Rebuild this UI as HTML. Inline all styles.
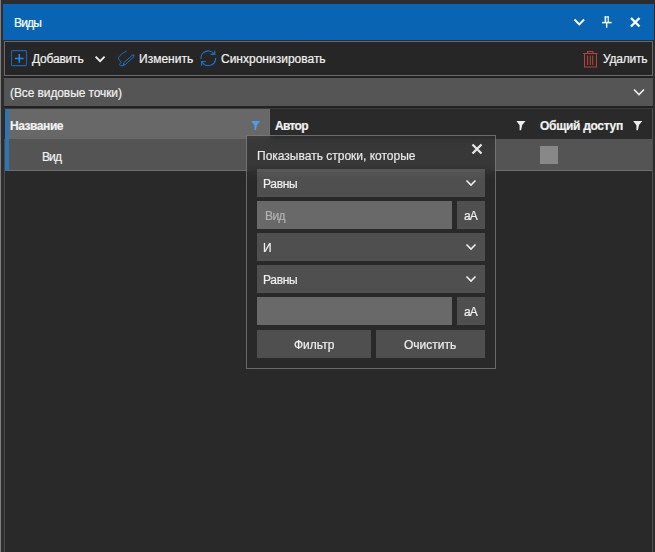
<!DOCTYPE html>
<html><head><meta charset="utf-8">
<style>
*{box-sizing:border-box}
html,body{margin:0;padding:0}
body{width:655px;height:552px;overflow:hidden;position:relative;background:#2d2d2d;font-family:"Liberation Sans",sans-serif;font-size:12px;color:#f2f2f2}
.a{position:absolute}
.t{position:absolute;white-space:nowrap;line-height:14px;-webkit-text-stroke:0.2px currentColor}
.b{font-weight:bold}
svg{position:absolute;overflow:visible}
</style></head><body>
<div class="a" style="left:0;top:0;width:1px;height:552px;background:#7f7f7f"></div>
<!-- title bar -->
<div class="a" style="left:3px;top:4px;width:651px;height:36px;background:#0965b3"></div>
<div class="t" style="left:14px;top:16px;color:#fff;letter-spacing:-0.8px">Виды</div>
<svg style="left:0;top:0" width="655" height="40">
  <polyline points="574.5,19.5 579.3,24.3 584.1,19.5" fill="none" stroke="#fff" stroke-width="1.9"/>
  <rect x="604.6" y="16.4" width="1.6" height="6" fill="#fff"/>
  <rect x="607.6" y="16.4" width="1.2" height="6" fill="#fff"/>
  <rect x="604.6" y="16.4" width="4.2" height="1.1" fill="#fff"/>
  <path d="M602,22.6 H611.6" fill="none" stroke="#fff" stroke-width="1.5"/>
  <path d="M606.7,22.6 V27.8" fill="none" stroke="#fff" stroke-width="1.3"/>
  <path d="M631,18 L639.5,26.5 M639.5,18 L631,26.5" fill="none" stroke="#fff" stroke-width="2.4"/>
</svg>
<!-- panel -->
<div class="a" style="left:4px;top:41px;width:649px;height:511px;background:#292929;border-left:1px solid #4a4a4a;border-right:1px solid #505050"></div>
<!-- toolbar -->
<div class="a" style="left:4px;top:41px;width:649px;height:35px;background:#262626;border:1px solid #6a6a6a"></div>
<div class="a" style="left:4px;top:76px;width:649px;height:2px;background:#222"></div>
<svg style="left:0;top:0" width="655" height="80">
  <rect x="11.5" y="50.6" width="15" height="15" rx="1.2" fill="none" stroke="#1866b2" stroke-width="1.1"/>
  <path d="M19.3,54 V62.8 M15,58.4 H23.6" stroke="#1f8ae6" stroke-width="1.5"/>
  <polyline points="95.6,56.6 100.1,61.1 104.6,56.6" fill="none" stroke="#f0f0f0" stroke-width="1.85"/>
  <path d="M126.6,51.2 C122.5,53 118.8,55.8 118.3,58.8 L121.2,62.2 L119.4,64.4 L120.2,65.6 L123.2,65.6" fill="none" stroke="#1a74c6" stroke-width="1"/>
  <path d="M123.2,65.6 L123.9,62.6 L132.6,55 L134,56.6 L125.6,64.4 Z" fill="none" stroke="#1a74c6" stroke-width="1"/>
  <path d="M123.2,65.6 L123.9,63 L125.2,64.4 Z M132.4,54.9 L133.4,54.3 L134.6,55.6 L134,56.6 Z" fill="#1a74c6"/>
  <path d="M201,59 A7.2,7.2 0 0 1 214.4,54.6" fill="none" stroke="#1a72c4" stroke-width="1.2"/>
  <path d="M210.6,54.4 H214.8 V50.4" fill="none" stroke="#1a72c4" stroke-width="1.2"/>
  <path d="M215.6,58 A7.2,7.2 0 0 1 202.2,62" fill="none" stroke="#1a72c4" stroke-width="1.2"/>
  <path d="M205.8,61.5 H201.6 V65.8" fill="none" stroke="#1a72c4" stroke-width="1.2"/>
  <g fill="none" stroke="#b5433a" stroke-width="1.05">
    <path d="M583,53.5 H597.5"/>
    <path d="M587.5,53.5 V51.5 H593 V53.5"/>
    <path d="M584.5,53.5 V67 H596.5 V53.5"/>
    <path d="M587.6,55.5 V65 M590.3,55.5 V65 M592.7,55.5 V65"/>
  </g>
</svg>
<div class="t" style="left:32px;top:52px;letter-spacing:-0.2px">Добавить</div>
<div class="t" style="left:139px;top:52px">Изменить</div>
<div class="t" style="left:221px;top:52px">Синхронизировать</div>
<div class="t" style="left:603px;top:52px;letter-spacing:-0.2px">Удалить</div>
<!-- filter dropdown -->
<div class="a" style="left:4px;top:78px;width:649px;height:28px;background:#555"></div>
<div class="t" style="left:10px;top:86px;letter-spacing:-0.1px">(Все видовые точки)</div>
<svg style="left:0;top:0" width="655" height="110">
  <polyline points="634,89.5 639,94.5 644,89.5" fill="none" stroke="#f0f0f0" stroke-width="1.6"/>
</svg>
<div class="a" style="left:4px;top:106px;width:649px;height:2px;background:#222"></div>
<!-- header -->
<div class="a" style="left:4px;top:108px;width:649px;height:31px;background:#2a2a2a;border-top:1px solid #3a3a3a;border-right:1px solid #505050"></div>
<div class="a" style="left:9px;top:109px;width:261px;height:30px;background:#686868;border-right:1px solid #6f6f6f"></div>
<div class="a" style="left:5px;top:109px;width:4px;height:62px;background:#2d75b4"></div>
<div class="t b" style="left:10px;top:119px;letter-spacing:-0.45px">Название</div>
<div class="t b" style="left:275px;top:119px;letter-spacing:-0.7px">Автор</div>
<div class="t b" style="left:540px;top:119px;letter-spacing:-0.3px">Общий доступ</div>
<svg style="left:0;top:0" width="655" height="140">
  <path d="M251.2,121 H260.3 L257,125 L255.9,130 H254.4 V125.2 Z" fill="#4a9ef0"/>
  <path d="M516.4,121 H525.5 L522.2,125 L521.1,130.2 H519.6 V125.2 Z" fill="#eeeeee"/>
  <path d="M633.2,121 H642.3 L639,125 L637.9,130.2 H636.4 V125.2 Z" fill="#eeeeee"/>
</svg>
<!-- row -->
<div class="a" style="left:9px;top:139px;width:643px;height:32px;background:#545454;border-bottom:1px solid #6e6e6e"></div>
<div class="t" style="left:42px;top:150px;letter-spacing:-0.9px">Вид</div>
<div class="a" style="left:540px;top:146px;width:18px;height:18px;background:#888"></div>
<!-- popup -->
<div class="a" style="left:246px;top:135px;width:250px;height:234px;background:rgba(42,42,42,0.65);-webkit-backdrop-filter:blur(5px);backdrop-filter:blur(5px);border:1px solid rgba(255,255,255,0.3)"></div>
<div class="t" style="left:257px;top:149px;color:#e8e8e8">Показывать строки, которые</div>
<svg style="left:0;top:0" width="655" height="380">
  <path d="M472.5,144.5 L481.5,153.5 M481.5,144.5 L472.5,153.5" fill="none" stroke="#e6e6e6" stroke-width="2.3"/>
</svg>
<div class="a" style="left:257px;top:169px;width:228px;height:28px;background:rgba(255,255,255,0.18)"></div>
<div class="t" style="left:263px;top:177px;color:#f0f0f0;letter-spacing:-0.3px">Равны</div>
<div class="a" style="left:257px;top:201px;width:195px;height:28px;background:rgba(255,255,255,0.3)"></div>
<div class="t" style="left:265px;top:209px;color:#b2b2b2;letter-spacing:-0.6px">Вид</div>
<div class="a" style="left:457px;top:201px;width:28px;height:28px;background:rgba(255,255,255,0.18)"></div>
<div class="t" style="left:464px;top:209px;color:#f0f0f0;letter-spacing:-0.9px">aA</div>
<div class="a" style="left:257px;top:233px;width:228px;height:28px;background:rgba(255,255,255,0.18)"></div>
<div class="t" style="left:263px;top:241px;color:#f0f0f0">И</div>
<div class="a" style="left:257px;top:265px;width:228px;height:28px;background:rgba(255,255,255,0.18)"></div>
<div class="t" style="left:263px;top:273px;color:#f0f0f0;letter-spacing:-0.3px">Равны</div>
<div class="a" style="left:257px;top:297px;width:195px;height:28px;background:rgba(255,255,255,0.3)"></div>
<div class="a" style="left:457px;top:297px;width:28px;height:28px;background:rgba(255,255,255,0.18)"></div>
<div class="t" style="left:464px;top:305px;color:#f0f0f0;letter-spacing:-0.9px">aA</div>
<div class="a" style="left:257px;top:330px;width:114px;height:28px;background:rgba(255,255,255,0.18)"></div>
<div class="t" style="left:294px;top:338px;color:#f0f0f0">Фильтр</div>
<div class="a" style="left:376px;top:330px;width:109px;height:28px;background:rgba(255,255,255,0.18)"></div>
<div class="t" style="left:404px;top:338px;color:#f0f0f0">Очистить</div>
<svg style="left:0;top:0" width="655" height="380">
  <g fill="none" stroke="#eeeeee" stroke-width="1.6">
  <polyline points="466.5,180.5 471,185 475.5,180.5"/>
  <polyline points="466.5,244.5 471,249 475.5,244.5"/>
  <polyline points="466.5,276.5 471,281 475.5,276.5"/>
  </g>
</svg>
</body></html>
